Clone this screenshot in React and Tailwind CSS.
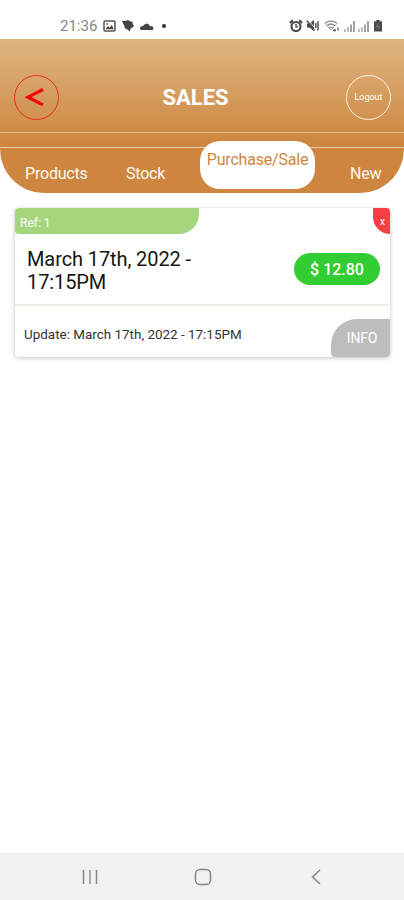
import React from "react";

const StatusBar = () => {
  return (
    <div className="h-[39px] flex items-start justify-between pl-[60px] pr-[21px] pt-[17px] text-[#4b4b4b]">
      <div className="flex items-center h-[17px]">
        <span className="w-[38px] pt-[1px] text-[15px] leading-[17px] text-[#858585]">21:36</span>
        <svg className="ml-[5px]" width="13" height="12" viewBox="0 0 13 12">
          <rect x="1" y="1" width="11" height="10" rx="1" fill="none" stroke="#555" strokeWidth="1.5" />
          <path d="M2.5 9.3 5 6l1.7 1.8L8.8 5l2 4.3z" fill="#444" />
          <circle cx="4.2" cy="3.9" r="0.9" fill="#555" />
        </svg>
        <svg className="ml-[5px]" width="14" height="13" viewBox="0 0 14 13">
          <path d="M1 1.800 4.200 2l2.600-1 2.300 1.200 2.300.6.4 2.200L13 7l-2.200 2-1.300.6L9 12.500 6.600 10.500 4 9.500 3.300 6.800 1.800 4z" fill="#444" />
        </svg>
        <svg className="ml-[4px]" width="16" height="12" viewBox="0 0 16 12">
          <path d="M2 10a2 2 0 0 1 0-3.600L4.200 5.800A3.600 3.600 0 0 1 10.500 5.200L11 6.400A2 2 0 0 1 13.500 10z" fill="#444" />
        </svg>
        <span className="ml-[7px] size-[4px] rounded-full bg-[#333]"></span>
      </div>

      <div className="flex items-center h-[17px]">
        <svg width="14" height="14" viewBox="0 0 13 13" fill="none" stroke="#444">
          <circle cx="6.500" cy="7" r="4.200" strokeWidth="1.900" />
          <path d="M6.500 4.700V7.300H8.500" strokeWidth="1.300" />
          <path d="M.8 3.600 3.600 1.200M12.200 3.600 9.400 1.200" strokeWidth="1.900" />
        </svg>
        <svg className="ml-[3px]" width="14" height="13" viewBox="0 0 14 13">
          <path d="M1 4.500h2.500L8 1v11L3.500 8.500H1z" fill="#444" />
          <path d="M2 .5 10 10.500" stroke="#fff" strokeWidth="1" />
          <path d="M1 1.500 8.500 11.500M9.800 4v5M12 2v9.500" stroke="#555" strokeWidth="1.500" fill="none" />
        </svg>
        <svg className="ml-[4px]" width="16" height="14" viewBox="0 0 16 14" fill="none">
          <path d="M1 4.200a9.500 9.500 0 0 1 12 0M3 6.700a6.200 6.200 0 0 1 8 0M5 9a3.500 3.500 0 0 1 4 0" stroke="#8a8a8a" strokeWidth="1.300" />
          <path d="M1 4.200 7 11.300 13 4.200" stroke="#999" strokeWidth=".8" />
          <circle cx="10.500" cy="11.300" r="1.300" fill="#555" />
          <path d="M14 8.500v3" stroke="#777" strokeWidth="1.600" />
        </svg>
        <svg className="ml-[4px]" width="12" height="12" viewBox="0 0 12 12" strokeWidth="1.800">
          <path d="M1 9v3M4 7v5" stroke="#bbb" />
          <path d="M7 4.500V12M10 1v11" stroke="#999" />
        </svg>
        <svg className="ml-[2px]" width="12" height="12" viewBox="0 0 12 12" strokeWidth="1.800">
          <path d="M1 9v3M4 7v5" stroke="#bbb" />
          <path d="M7 4.500V12M10 1v11" stroke="#999" />
        </svg>
        <svg className="ml-[3px]" width="10" height="13" viewBox="0 0 10 13">
          <path d="M3.300 1h3.400v1.300H9V12.500H1V2.300h2.300z" fill="#4a4a4a" />
          <path d="M5.300 4.300 3.500 7.500h3L4.700 10.500" stroke="#888" strokeWidth=".8" fill="none" />
        </svg>
      </div>
    </div>
  );
};

const Header = () => {
  return (
    <header className="h-[109px] bg-[linear-gradient(to_bottom,#deb681_0px,#cd853f_106px)] border-b border-[#e9cba4]">
      <div className="h-[94px] pt-[23px] pl-[14px] pr-[13px] flex items-center justify-between border-b border-[#e2b98a]">
        <button className="size-[45px] rounded-full border border-[#e8301a] flex items-center justify-center">
          <svg className="mr-[5px]" width="20" height="20" viewBox="0 0 20 20" fill="none">
            <path d="M19 2.500 4 10.200 19 17.900" stroke="#f00808" strokeWidth="3.200" />
          </svg>
        </button>
        <h1 className="mr-[14px] pt-[2px] text-[22px] leading-[26px] font-bold text-white">SALES</h1>
        <button className="size-[45px] pt-[2px] rounded-full border-[1.5px] border-[#fff3e4] text-[9px] text-white">
          Logout
        </button>
      </div>
    </header>
  );
};

const Nav = () => {
  return (
    <nav className="h-[45px] flex items-start rounded-b-[44px] bg-[#cd853f] text-[16px] leading-[19px] tracking-[-0.2px] text-[#fff8ef]">
      <a className="w-[125px] pl-[25px] pt-[16px]">Products</a>
      <a className="w-[75px] pl-[1px] pt-[16px]">Stock</a>
      <a className="relative w-[115px] h-[48px] -mt-[7px] pt-[9px] rounded-[20px] bg-white text-center text-[#cd853f] whitespace-nowrap">
        Purchase/Sale
      </a>
      <a className="pl-[35px] pt-[16px]">New</a>
    </nav>
  );
};

const SaleCard = ({ id, date, total }) => {
  return (
    <div className="ml-[15px] mr-[14px] mt-[15px] h-[149px] flex flex-col rounded-[4px] overflow-hidden bg-white shadow-[0_1px_4px_rgba(0,0,0,0.25)]">
      <div className="h-[26px] flex justify-between text-white">
        <div className="w-[184px] pl-[5px] pt-[2px] text-[12px] leading-[26px] bg-[#a5d57d] rounded-bl-[4px] rounded-br-[20px]">
          Ref: {id}
        </div>
        <button className="w-[17px] text-[10px] pl-[2px] bg-[#f93e46] rounded-bl-[18px]">x</button>
      </div>

      <div className="h-[72px] flex items-center justify-between pl-[12px] pr-[10px] border-b-2 border-[#efede3]">
        <p className="w-[200px] pt-[4px] text-[20px] leading-[23px] tracking-[-0.1px] text-[#151515]">{date}</p>
        <span className="w-[86px] h-[32px] rounded-full bg-[#32cd32] text-center text-[16px] leading-[34px] font-medium text-white">
          $ {total}
        </span>
      </div>

      <div className="flex-1 flex justify-between pl-[9px]">
        <p className="pt-[20px] text-[13.45px] leading-[18px] text-[#333] whitespace-nowrap">Update: {date}</p>
        <button className="self-end w-[59px] h-[38px] pl-[3px] pt-[1px] rounded-tl-[26px] rounded-bl-[4px] bg-[#bdbdbd] text-[14px] tracking-[-0.2px] text-white">
          INFO
        </button>
      </div>
    </div>
  );
};

const SystemNav = () => {
  return (
    <div className="h-[47px] bg-[#f1f1f1] flex items-center pl-[82px] text-[#858585]">
      <svg width="16" height="16" viewBox="0 0 16 16" fill="none" strokeWidth="1.500">
        <path d="M1.500 1v14M14.500 1v14" stroke="#858585" />
        <path d="M8 1v14" stroke="#aaa" strokeWidth="2" />
      </svg>
      <svg className="ml-[96px]" width="18" height="18" viewBox="0 0 18 18" fill="none">
        <rect x="1.500" y="1.500" width="15" height="15" rx="4.500" stroke="#858585" strokeWidth="1.500" />
      </svg>
      <svg className="ml-[98px]" width="12" height="16" viewBox="0 0 12 16" fill="none">
        <path d="M10 1 2.500 8l7.500 7" stroke="#858585" strokeWidth="1.500" />
      </svg>
    </div>
  );
};

const App = () => {
  return (
    <div className="w-[404px] h-[900px] flex flex-col bg-white font-['Roboto',sans-serif] overflow-hidden">
      <StatusBar />
      <Header />
      <Nav />
      <main className="flex-1">
        <SaleCard id={1} date="March 17th, 2022 - 17:15PM" total="12.80" />
      </main>
      <SystemNav />
    </div>
  );
};

export default App;
